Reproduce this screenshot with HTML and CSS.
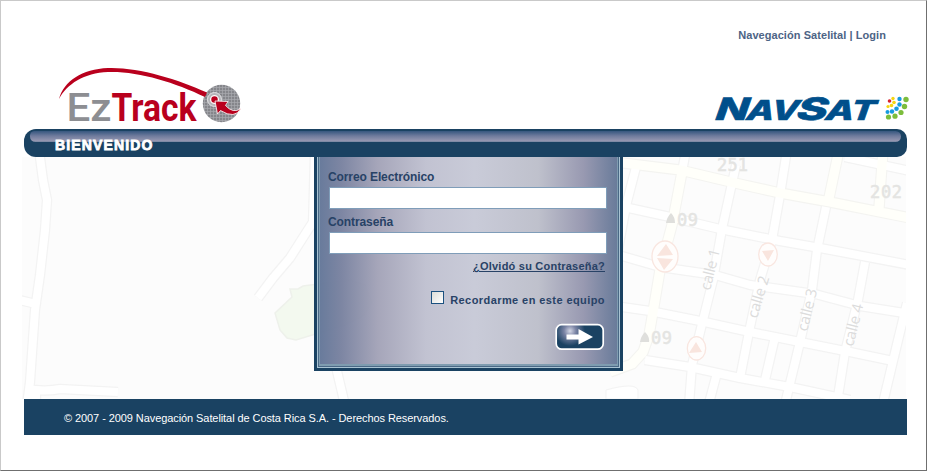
FILE: index.html
```html
<!DOCTYPE html>
<html lang="es">
<head>
<meta charset="utf-8">
<title>EzTrack</title>
<link rel="stylesheet" href="styles.css">
</head>
<body>
<div class="page">
  <nav class="topnav"><a>Navegación Satelital</a> | <a>Login</a></nav>
  <header class="brands">
    <svg class="eztrack" width="186" height="60" viewBox="57 65 186 60">
      <defs>
        <pattern id="grid" width="3" height="3" patternUnits="userSpaceOnUse"><rect width="3" height="3" fill="#85868b"/><path d="M0 .5H3M.5 0V3" stroke="#a9aaaf" stroke-width=".7"/></pattern>
      </defs>
      <text class="ez" x="66.500" y="120.500" textLength="45" lengthAdjust="spacingAndGlyphs">Ez</text>
      <text class="track" x="111.500" y="120.500" textLength="85" lengthAdjust="spacingAndGlyphs">Track</text>
      <circle cx="221.500" cy="103.500" r="18.700" fill="url(#grid)"/>
      <path d="M59 99C64 81 82 69 108 68C138 67 177 79 207 92.500L205 97C174 82 138 71 108 72C84 73 67 84 59 99Z" fill="#b9001d"/>
      <circle cx="214.500" cy="99.500" r="7" fill="#b5b5b9" stroke="#e4e4e6" stroke-width="1"/>
      <circle cx="214.500" cy="99.500" r="3.900" fill="#b9001d" stroke="#fff" stroke-width="1.300"/>
      <path d="M215 101L228 101.500L225.500 105.500Q233 114 241 108.500Q235 119.500 220.500 110.500L217.500 114Z" fill="#b9001d" stroke="#fff" stroke-width=".8"/>
    </svg>
    <svg class="navsat" width="196" height="32" viewBox="714 92 196 32">
      <g class="nav" transform="translate(716 119.500) skewX(-7)">
        <text class="cap" x="-1" y="0" textLength="33" lengthAdjust="spacingAndGlyphs">N</text>
        <text class="low" x="30" y="0" textLength="52" lengthAdjust="spacingAndGlyphs">AV</text>
        <text class="cap" x="80" y="0" textLength="31" lengthAdjust="spacingAndGlyphs">S</text>
        <text class="low" x="109" y="0" textLength="50" lengthAdjust="spacingAndGlyphs">AT</text>
      </g>
      <g fill="#f6d511"><circle cx="893" cy="98.500" r="1.700"/><circle cx="894" cy="102.500" r="1.800"/><circle cx="891.500" cy="105.500" r="1.800"/><circle cx="888" cy="106.500" r="1.600"/></g>
      <circle cx="889.500" cy="101" r="1.800" fill="#d9222a"/>
      <g fill="#169be0"><circle cx="899.500" cy="99" r="2.200"/><circle cx="899.500" cy="104.500" r="2.200"/><circle cx="896.500" cy="108.800" r="2.300"/><circle cx="892" cy="111.500" r="2.200"/><circle cx="887.500" cy="112" r="2"/></g>
      <g fill="#7cbd3c"><circle cx="906" cy="99.500" r="2.700"/><circle cx="904.500" cy="106.500" r="2.700"/><circle cx="901" cy="112.500" r="2.600"/><circle cx="895" cy="116.200" r="2.600"/><circle cx="888.500" cy="117" r="2.600"/></g>
    </svg>
  </header>
  <div class="bar"><div class="gloss"></div><h1>BIENVENIDO</h1></div>
  <main>
    <svg class="map" width="884" height="242" viewBox="22 157 884 242">
      <defs>
        <g id="streets">
          <path d="M39 150L43 180L47 200L45 230L40 275L35 310L30 382L27 405M15 299L36 304M27 389Q45 392 60 389L118 392M36 392V405"/>
          <path d="M315 150L313 222L304 236L290 258L273 278L258 298"/>
          <path d="M615 205L670 217L720 229L780 241L820 248L915 266M615 254L660 267L715 275L750 285L815 294L860 306L904 313M615 306L650 311L700 321L750 332L800 342L850 352L893 361M645 360L690 367L740 378L790 387L850 400"/>
          <path d="M736 165L722 229L713 280L703 320L692 365L689 405M787 150L780 195L772 240L760 280L749 332L740 378M826 207L817 250L812 290L800 342L786 400M865 262L858 300L845 352L837 403M907 303L893 361L883 403M775 337L765 380M717 373L709 403M636 167L626 206L618 250M686 150L682 172M845 157L910 171M345 405L332 350"/>
        </g>
        <g id="avenues">
          <path d="M615 162L680 170L735 183L780 193L830 202L910 218M682 172L672 225L660 270L655 300L649 335L643 352L632 364L610 372M839 150L829 198M883 150L879 208"/>
        </g>
      </defs>
      <rect x="22" y="157" width="884" height="242" fill="#fcfcfc"/>
      <path d="M290 289L298 289L303 286L350 280L365 285L372 303L363 316L345 325L296 340L287 338L280 330L275 313L292 297Z" fill="#f3f9ef" stroke="#eef1eb" stroke-width="1.500"/>
      <g fill="none" stroke-linejoin="round">
        <use href="#streets" stroke="#f3f3f3" stroke-width="10.500"/>
        <use href="#avenues" stroke="#f4f4f1" stroke-width="11.500"/>
        <use href="#streets" stroke="#fff" stroke-width="8"/>
        <use href="#avenues" stroke="#fffffa" stroke-width="9.300"/>
      </g>
      <path d="M606 390Q635 382 638 390V399H606Z" fill="#fff" stroke="#f3f3f3"/>
      <g class="routes">
        <text x="717" y="171" textLength="31">251</text>
        <text x="870" y="198" textLength="32">202</text>
        <text x="677" y="226" textLength="21">09</text>
        <text x="651" y="344" textLength="21">09</text>
      </g>
      <path d="M666 223Q667 217 671 213Q675 217 675 223ZM640 342Q641 336 645 332Q650 337 649 342Z" fill="#dfdfdc"/>
      <g fill="#fffdfc" stroke="#f9e6e0" stroke-width="1.300">
        <ellipse cx="665" cy="256.500" rx="13" ry="15.500"/><ellipse cx="768" cy="254.500" rx="9.300" ry="11.500"/><ellipse cx="696.500" cy="348.300" rx="9.200" ry="11.700"/>
      </g>
      <path d="M666 244L673 255L657 256ZM657 258L673 259L664 270ZM762 251L774 250L768 261ZM696 342L702 352L689 353Z" fill="#f9e5de"/>
      <g class="calles">
        <text transform="translate(710 291) rotate(-76)" textLength="42">calle 1</text>
        <text transform="translate(757 319) rotate(-73)" textLength="43">calle 2</text>
        <text transform="translate(807 332) rotate(-76)" textLength="43">calle 3</text>
        <text transform="translate(853 347) rotate(-76)" textLength="43">calle 4</text>
      </g>
    </svg>
    <form class="login">
      <label for="mail">Correo Electrónico</label>
      <input id="mail" type="text">
      <label for="pass">Contraseña</label>
      <input id="pass" type="password">
      <a class="forgot">¿Olvidó su Contraseña?</a>
      <div class="remember"><span class="check"></span><span>Recordarme en este equipo</span></div>
      <svg class="go" width="50" height="28" viewBox="0 0 50 28">
        <defs><radialGradient id="shine" gradientUnits="userSpaceOnUse" cx="15" cy="8" r="15"><stop offset="0" stop-color="#d5d8e6"/><stop offset=".4" stop-color="#7a83a4"/><stop offset="1" stop-color="#1a4262"/></radialGradient></defs>
        <rect x="1.200" y="1.700" width="47" height="24.500" rx="5.500" fill="url(#shine)" stroke="#fff" stroke-width="1.700"/>
        <path d="M11.500 11.500H23.500V6L38 14L23.500 21.500V16.500H11.500Z" fill="#fff"/>
      </svg>
    </form>
  </main>
  <footer>© 2007 - 2009 Navegación Satelital de Costa Rica S.A. - Derechos Reservados.</footer>
</div>
</body>
</html>
```

FILE: styles.css
```css
* { box-sizing: border-box; }
body { margin: 0; background: #fff; font-family: "Liberation Sans", Arial, sans-serif; }
.page {
  width: 927px; height: 471px; overflow: hidden;
  border: 1px solid; border-color: #c9c9c9 #6f6f6f #6f6f6f #c9c9c9;
  padding-left: 23px;
  display: flex; flex-direction: column;
}
.topnav {
  height: 64px; padding: 27px 40px 0 0; text-align: right;
  font-size: 11px; line-height: 14px; font-weight: bold; color: #4d6485; letter-spacing: .06px;
}
.brands { height: 64px; display: flex; justify-content: space-between; padding: 0 16px 0 33px; }
.brands svg { overflow: visible; }
.navsat { margin-top: 27px; }
.ez, .track { font-family: Roboto, sans-serif; font-size: 39px; }
.ez { fill: #8d8e92; font-weight: 500; }
.track { fill: #b9001d; font-weight: 700; }
.nav {
  fill: #004f8b; stroke: #004f8b; stroke-width: .6px;
  font-family: Inter, sans-serif; font-weight: 800; font-style: italic;
}
.cap { font-size: 31px; }
.low { font-size: 27.5px; }
.bar {
  width: 883px; height: 28px; flex: none; padding: 2px 6px 0;
  background: #1a4262; border-radius: 12px 10px 10px 12px;
}
.gloss {
  height: 11px; border-radius: 5px 6px 6px 6px;
  background: linear-gradient(#36577f, #6f7b9d 45%, #9496b0 88%, #7285a0);
}
.bar h1 {
  margin: -5px 0 0 25px; font-size: 14px; line-height: 16px; letter-spacing: 1.15px;
  font-weight: 900; color: #fff; -webkit-text-stroke: .8px #fff; position: relative;
}
main { height: 242px; width: 884px; margin-left: -2px; display: grid; flex: none; }
.map, .login { grid-area: 1 / 1; }
.map { overflow: hidden; }
.routes { font: 17px "DejaVu Sans Mono", monospace; fill: #e4e4e2; stroke: #e4e4e2; stroke-width: .5px; }
.calles { font: 15px "Open Sans", sans-serif; fill: #dcdcdc; }
.login {
  z-index: 1; width: 309px; height: 214px; margin-left: 292px; padding: 12px 11px 0 10px;
  border: solid #1a4262; border-width: 0 3px 3px;
  box-shadow: inset 1px 0 #a9c3d3, inset -1px 0 #a9c3d3, inset 0 -1px #a9c3d3,
    inset 2px 0 #4a6986, inset -2px 0 #4a6986, inset 0 -2px #4a6986,
    inset 3px 0 #7f9cb0, inset -3px 0 #7f9cb0, inset 0 -4px #7f9cb0;
  background: linear-gradient(90deg, rgba(99,119,153,.98), rgba(121,130,160,.97) 8%, rgba(161,161,182,.95) 20%, rgba(190,191,207,.94) 36%, rgba(198,200,214,.94) 52%, rgba(187,189,201,.94) 73%, rgba(148,149,174,.96) 88%, rgba(98,118,150,.98));
  display: flex; flex-direction: column; align-items: flex-start;
}
.login label { font-size: 12px; line-height: 16px; font-weight: bold; color: #284266; margin-left: 1px; letter-spacing: -.1px; }
.login input {
  width: 278px; height: 22px; flex: none; margin: 2px 0 5px 2px; padding: 0 4px;
  border: 1px solid #7f9db9; background: #fff; outline: 0; font: 12px "Liberation Sans", sans-serif;
}
.forgot, .remember { align-self: flex-end; margin-right: 4px; font-size: 11px; line-height: 14px; font-weight: bold; color: #284266; letter-spacing: .42px; }
.forgot { text-decoration: underline; letter-spacing: .22px; }
.remember { display: flex; gap: 6px; margin-top: 18px; align-items: flex-start; }
.remember span:last-child { margin-top: 2px; }
.check { width: 13px; height: 13px; border: 1px solid #1c5180; background: linear-gradient(135deg, #dcdcd7, #fff); }
.go { align-self: flex-end; margin: 16px 4px 0 0; }
footer {
  width: 883px; height: 36px; flex: none; padding-left: 40px;
  background: #1a4262; color: #fff; font-size: 11px; line-height: 38px; letter-spacing: -.08px;
}
```
